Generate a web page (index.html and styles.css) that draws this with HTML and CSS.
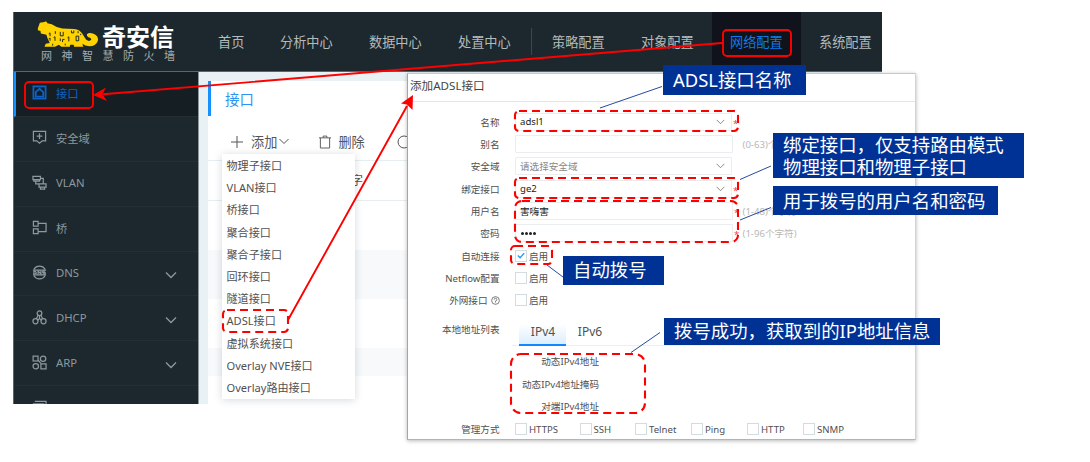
FILE: index.html
```html
<!DOCTYPE html>
<html lang="zh-CN">
<head>
<meta charset="utf-8">
<title>添加ADSL接口</title>
<link rel="stylesheet" href="styles.css">
</head>
<body>
<main class="slide">
  <section class="app">
    <header class="topbar">
      <div class="brand">
        <div class="brand-row">
          <svg class="tiger" viewBox="0 0 190 82">
            <path fill="#ffd200" d="M2 22 L8 5 L22 3 L27 1 L31 7 L44 10 Q58 20 76 23 L112 24 Q130 25 137 39 Q142 48 149 57 Q158 64 164 57 Q165 51 156 49 Q149 46 151 40 Q158 34 171 39 Q187 45 184 61 Q178 77 158 77 Q145 76 137 69 L140 78 L112 78 L111 72 L100 72 L99 78 L73 78 L66 72 L54 78 L22 78 L26 69 L38 67 L31 52 L28 42 L11 38 L10 30 L2 28 Z"/>
            <g fill="none" stroke="#1c282d" stroke-width="3">
              <path d="M39 36 v10 m-4 -7 l4 -3 M39 52 v8 m-4 -6 l4 -2 M55 31 v8 M54 48 v12 m-4 -10 l4 -2 M70 33 v12 h9 v-12 M70 53 v8 M83 56 h-6 v8 M96 48 v14 m-4 -11 l4 -3 M104 29 v7 h7 v-7 M118 46 v14 h8 v-14 z M47 69 v6 M85 69 v5"/>
              <path d="M124 31 v6 M132 39 v4"/>
            </g>
          </svg>
          <strong>奇安信</strong>
        </div>
        <div class="brand-sub"><span>网</span><span>神</span><span>智</span><span>慧</span><span>防</span><span>火</span><span>墙</span></div>
      </div>
      <nav class="nav">
        <span>首页</span><span>分析中心</span><span>数据中心</span><span>处置中心</span>
        <i class="nav-sep"></i>
        <span>策略配置</span><span>对象配置</span><span class="current">网络配置</span><span>系统配置</span>
      </nav>
    </header>
    <div class="body">
      <aside class="side">
        <div class="item on">
          <svg viewBox="0 0 16 16"><rect x="1.5" y="1.5" width="13" height="13"/><path d="M4 12.500v-5l4-3.500l4 3.500v5z"/></svg>
          <span>接口</span>
        </div>
        <div class="item">
          <svg viewBox="0 0 16 16"><path d="M1.500 1.500h13v10h-3.500l-3 2.500l-3-2.500H1.500zM8 3.500v6M5 6.500h6"/></svg>
          <span>安全域</span>
        </div>
        <div class="item">
          <svg viewBox="0 0 16 16"><path d="M1 1.500h8v3.500h-8zM2 5v1.500h6V5M7.500 9.500h7.500v3.500H7.500zM9 13v2h4.500v-2M4 6.500v3h3.500M9 3.500h3v6"/></svg>
          <span>VLAN</span>
        </div>
        <div class="item">
          <svg viewBox="0 0 16 16"><path d="M1.500 1.500h5v5h-5zM1.500 9.500h5v5h-5zM6.500 3.500H15v9H6.500"/></svg>
          <span>桥</span>
        </div>
        <div class="item">
          <svg viewBox="0 0 16 16"><path d="M2 4.500a7 7 0 0 1 12 0M2 11.500a7 7 0 0 0 12 0M1 5.500h14M1 10.500h14"/><path d="M2 6.500v3q3 0 2.500-1.500T2 6.500M6.500 10V6.500l3 3V6M14 6.500h-2.500v1.500H14v1.500h-2.500"/></svg>
          <span>DNS</span><svg class="arrow" viewBox="0 0 12 8"><path d="M1 1.500l5 5l5-5"/></svg>
        </div>
        <div class="item">
          <svg viewBox="0 0 16 16"><circle cx="8" cy="3.500" r="2.500"/><circle cx="3.700" cy="12" r="2.700"/><circle cx="12.300" cy="12" r="2.700"/><path d="M6.500 5.500l-2 4M9.500 5.500l2 4M8 6v3l-2 2M8 9l2 2"/></svg>
          <span>DHCP</span><svg class="arrow" viewBox="0 0 12 8"><path d="M1 1.500l5 5l5-5"/></svg>
        </div>
        <div class="item">
          <svg viewBox="0 0 16 16"><rect x="1.200" y="1.200" width="5.200" height="5.200"/><circle cx="11.800" cy="4" r="2.900"/><circle cx="4" cy="12" r="2.900"/><path d="M9.500 9.500h5.500v5.300H9.500zM6.500 5.500l3.500 4"/></svg>
          <span>ARP</span><svg class="arrow" viewBox="0 0 12 8"><path d="M1 1.500l5 5l5-5"/></svg>
        </div>
        <div class="item last">
          <svg viewBox="0 0 16 16"><path d="M3 1.500h12v9M1.500 4h11v9h-11z"/></svg>
          <span>MAC</span>
        </div>
      </aside>
      <div class="content">
        <h1>接口</h1>
        <div class="tools">
          <svg class="plus" viewBox="0 0 12 12"><path d="M6 0v12M0 6h12"/></svg>
          <span>添加</span>
          <svg class="down" viewBox="0 0 10 7"><path d="M.5 1l4.500 4.500L9.500 1"/></svg>
          <svg class="trash" viewBox="0 0 13 14"><path d="M0 2.500h13M1.500 2.500v11h10v-11M4.500 2.500V.600h4v1.900"/></svg>
          <span>删除</span>
          <svg class="reload" viewBox="0 0 14 14"><path d="M11.500 3a6 6 0 1 0 0 8"/></svg>
        </div>
        <div class="table">
          <div class="thead">字</div>
          <div class="tr"></div><div class="tr alt"></div><div class="tr"></div><div class="tr alt short"></div>
        </div>
      </div>
    </div>
  </section>

  <ul class="menu">
    <li>物理子接口</li><li>VLAN接口</li><li>桥接口</li><li>聚合接口</li><li>聚合子接口</li><li>回环接口</li><li>隧道接口</li><li>ADSL接口</li><li>虚拟系统接口</li><li>Overlay NVE接口</li><li>Overlay路由接口</li>
  </ul>

  <section class="dialog">
    <h2>添加ADSL接口</h2>
    <div class="form">
      <div class="row"><label>名称</label><div class="field">adsl1<svg viewBox="0 0 10 7"><path d="M.5 1l4.500 4.500L9.500 1"/></svg></div><b>*</b></div>
      <div class="row"><label>别名</label><div class="field wide"></div><em>(0-63)个字符</em></div>
      <div class="row"><label>安全域</label><div class="field hint">请选择安全域<svg viewBox="0 0 10 7"><path d="M.5 1l4.500 4.500L9.500 1"/></svg></div></div>
      <div class="row"><label>绑定接口</label><div class="field">ge2<svg viewBox="0 0 10 7"><path d="M.5 1l4.500 4.500L9.500 1"/></svg></div><b>*</b></div>
      <div class="row"><label>用户名</label><div class="field wide">害嗨害</div><b>*</b><em>(1-48)个字符</em></div>
      <div class="row"><label>密码</label><div class="field wide pw"><i></i><i></i><i></i><i></i></div><b>*</b><em>(1-96个字符)</em></div>
      <div class="row"><label>自动连接</label><span class="box"><svg viewBox="0 0 10 10"><path d="M1.500 5l2.500 2.500l4.500-5"/></svg></span><span>启用</span></div>
      <div class="row"><label>Netflow配置</label><span class="box"></span><span>启用</span></div>
      <div class="row"><label>外网接口 <svg class="help" viewBox="0 0 10 10"><circle cx="5" cy="5" r="4.300"/><path d="M3.500 4a1.500 1.500 0 1 1 1.500 1.500v1M5 7.200v.800"/></svg></label><span class="box"></span><span>启用</span></div>
    </div>
    <div class="addresses">
      <label>本地地址列表</label>
      <div class="tabs"><span class="active">IPv4</span><span>IPv6</span></div>
    </div>
    <div class="dyn"><span>动态IPv4地址</span><span>动态IPv4地址掩码</span><span>对端IPv4地址</span></div>
    <div class="row manage"><label>管理方式</label>
      <div class="checks">
        <span><i class="box"></i>HTTPS</span><span><i class="box"></i>SSH</span><span><i class="box"></i>Telnet</span><span><i class="box"></i>Ping</span><span><i class="box"></i>HTTP</span><span><i class="box"></i>SNMP</span>
      </div>
    </div>
  </section>

  <svg class="marks" viewBox="0 0 1090 462">
    <g class="solid">
      <rect x="25" y="82" width="68" height="26" rx="4"/>
      <rect x="723" y="30" width="68" height="26" rx="4"/>
      <path d="M722 43L103 94.300M288 320L407 106"/>
    </g>
    <g fill="#f00" stroke="none"><path d="M93 95L106 87.500L102.500 94.300L107 101Z"/><path d="M413 95L401 103.500L407 104.500L412.500 110Z"/></g>
    <g class="dash">
      <rect x="223" y="310" width="65" height="22" rx="4"/>
      <rect x="515" y="111" width="223" height="20" rx="4"/>
      <rect x="515" y="178" width="223" height="20" rx="4"/>
      <rect x="515" y="201" width="223" height="41" rx="7"/>
      <rect x="511" y="246" width="41" height="18" rx="4"/>
      <rect x="511" y="354" width="134" height="59" rx="10"/>
    </g>
    <path class="lead" d="M600 108L662 86.500M740 179.500L771 166M740 220L771 207.500M547 265L563 277M631 352.500L660 332.500"/>
  </svg>
  <div class="note n1">ADSL接口名称</div>
  <div class="note n2">绑定接口，仅支持路由模式<br>物理接口和物理子接口</div>
  <div class="note n3">用于拨号的用户名和密码</div>
  <div class="note n4">自动拨号</div>
  <div class="note n5">拨号成功，获取到的IP地址信息</div>
</main>
</body>
</html>
```

FILE: styles.css
```css
* { box-sizing: border-box; }
body { margin: 0; background: #fff; font-family: "Noto Sans", "Noto Sans CJK SC", sans-serif; color: #505050; }
svg { fill: none; stroke: currentColor; display: block; flex: none; }
h1, h2, ul { margin: 0; padding: 0; font-weight: 400; }
i, em { font-style: normal; }
.slide { position: relative; width: 1090px; height: 462px; overflow: hidden; padding: 12px 0 0 13px; }

.app { width: 869px; height: 392px; display: flex; flex-direction: column; overflow: hidden; }
.topbar { display: flex; height: 60px; flex: none; background: #1c282d; border-bottom: 1px solid #59666b; border-left: 1px solid #59666b; }
.brand { width: 186px; padding: 9px 0 0 23px; flex: none; }
.brand-row { display: flex; height: 29px; }
.tiger { width: 63px; height: 27px; stroke: none; }
.brand strong { margin-left: 2px; margin-top: 3px; font-size: 24px; line-height: 25px; color: #fff; font-weight: 700; }
.brand-sub { display: flex; justify-content: space-between; width: 134px; margin-left: 4px; font-size: 11px; line-height: 12px; color: #a5abae; }
.nav { display: flex; font-size: 13.2px; line-height: 61px; color: #b4babc; }
.nav span { padding: 0 18px; white-space: nowrap; height: 60px; flex: none; }
.nav span:first-child { width: 62px; }
.nav span:not(:first-child) { width: 89px; }
.nav .current { background: #11131c; color: #0d7be8; }
.nav-sep { width: 1px; height: 27px; margin: 16px 2px 0; background: #3b474c; flex: none; }

.body { display: flex; flex: 1; min-height: 0; }
.side { width: 186px; background: #1c282d; border-right: 1px solid #8c979b; border-left: 1px solid #59666b; overflow: hidden; flex: none; }
.item { display: flex; align-items: center; height: 44.9px; padding: 0 21px 2px 18px; font-size: 11.3px; color: #8d999e; border-bottom: 1px solid #242f34; }
.item svg { width: 15px; height: 15px; stroke-width: 1.3; margin-right: 9px; }
.item .arrow { width: 12px; height: 8px; margin: 5px 0 0 auto; }
.item.on { background: #151e22; border-left: 2px solid #1490ff; padding-left: 16px; color: #0d62c4; }
.item.on svg { stroke-width: 1.9; }

.content { flex: 1; background: #fff; border-left: 9px solid #e9f1f4; border-top: 9px solid #e9f1f4; }
.content h1 { height: 35px; border-left: 3px solid #1490ff; padding-left: 14px; color: #2f93f5; font-size: 14.4px; line-height: 37px; }
.tools { display: flex; align-items: center; height: 44px; padding: 7px 0 0 23px; font-size: 13.2px; color: #555; }
.plus { width: 12px; height: 12px; margin-right: 8px; }
.down { width: 10px; height: 7px; margin: 0 30px 0 2px; }
.trash { width: 12px; height: 14px; margin-right: 7px; }
.reload { width: 14px; height: 14px; margin-left: 32px; }
.thead { height: 41px; border: solid #e7eef1; border-width: 1px 0; padding-left: 143px; line-height: 40px; font-size: 12px; }
.tr { height: 49px; }
.tr.alt { background: #f7f9fb; }
.tr.short { height: 28px; }

.menu { position: absolute; left: 222px; top: 154px; width: 133px; height: 245px; padding: 1px 0 0 4.5px; background: #fff; box-shadow: 0 1px 8px rgba(40,60,80,.2); list-style: none; font-size: 11.1px; line-height: 22.2px; }

.dialog { position: absolute; left: 407px; top: 73px; width: 509px; height: 367px; background: #fff; border: 1px solid; border-color: #c8c8c8 #d2d2d2 #b4b4b4 #a5a5a5; box-shadow: 0 1px 4px rgba(0,0,0,.28); font-size: 9.6px; }
.dialog h2 { height: 28px; border-bottom: 1px solid #dfe8ec; padding-left: 2px; font-size: 11.6px; line-height: 23px; color: #444; }
.form { padding-top: 8.5px; }
.row { display: flex; align-items: center; height: 22.35px; }
.row label, .addresses label { width: 91.5px; margin-right: 15.5px; display: flex; justify-content: flex-end; white-space: nowrap; flex: none; }
.field { width: 217px; height: 18px; border: 1px solid #ebeef0; border-radius: 1px; padding: 0 6px 0 4px; display: flex; align-items: center; color: #222; }
.field.wide { width: 218px; }
.field.hint { color: #888; }
.field svg { width: 9px; height: 6px; margin-left: auto; color: #777; }
.row b { width: 5px; margin: 3px 0 0 1px; color: #ff4040; font-weight: 400; }
.row em { color: #b8b8b8; margin-left: 3.5px; white-space: nowrap; }
.field.wide + em { margin-left: 9.5px; }
.pw { gap: 1px; padding-left: 5px; }
.pw i { width: 3px; height: 3px; border-radius: 50%; background: #222; }
.box { width: 12px; height: 12px; border: 1px solid #d3dcdf; margin-right: 2px; display: block; flex: none; }
.box svg { color: #2693fa; width: 10px; height: 9px; stroke-width: 1.4; }
.help { width: 9px; height: 9px; margin: 3px 0 0 3px; stroke-width: .8; }
.addresses { display: flex; height: 33.5px; margin-top: 1px; }
.addresses label { line-height: 14px; padding-top: 10px; }
.tabs { display: flex; flex: 1; margin-left: -3px; padding-left: 7px; border-bottom: 1px solid #ebf0f2; font-size: 12px; }
.tabs span { width: 47px; height: 33px; text-align: center; line-height: 38px; padding-left: 1px; }
.tabs .active { border-bottom: 2px solid #1089ff; background: linear-gradient(#fff 35%, #dceefd); }
.dyn { width: 191px; display: flex; flex-direction: column; align-items: flex-end; line-height: 22.4px; padding-top: 5px; }
.manage { height: 22px; }
.checks { display: grid; grid-template-columns: 64.5px 55.5px 56px 56px 56px 56px; }
.checks span { display: flex; align-items: center; }

.marks { position: absolute; left: 0; top: 0; width: 1090px; height: 462px; }
.solid { stroke: #f00; stroke-width: 1.9; }
.dash { stroke: #f00; stroke-width: 2.1; stroke-dasharray: 8 5; }
.lead { stroke: #254b9e; stroke-width: 1; }
.note { position: absolute; background: #003296; color: #fff; font-size: 18.4px; line-height: 22px; white-space: nowrap; padding-left: 10px; }
.n1 { left: 663px; top: 65px; width: 143px; height: 30px; padding-top: 4px; }
.n2 { left: 773px; top: 133px; width: 251px; height: 45px; padding-top: 1px; }
.n3 { left: 773px; top: 186px; width: 225px; height: 29px; padding-top: 4px; }
.n4 { left: 563px; top: 256px; width: 101px; height: 29px; padding-top: 3px; }
.n5 { left: 664px; top: 318px; width: 276px; height: 27px; padding-top: 2px; }
```
